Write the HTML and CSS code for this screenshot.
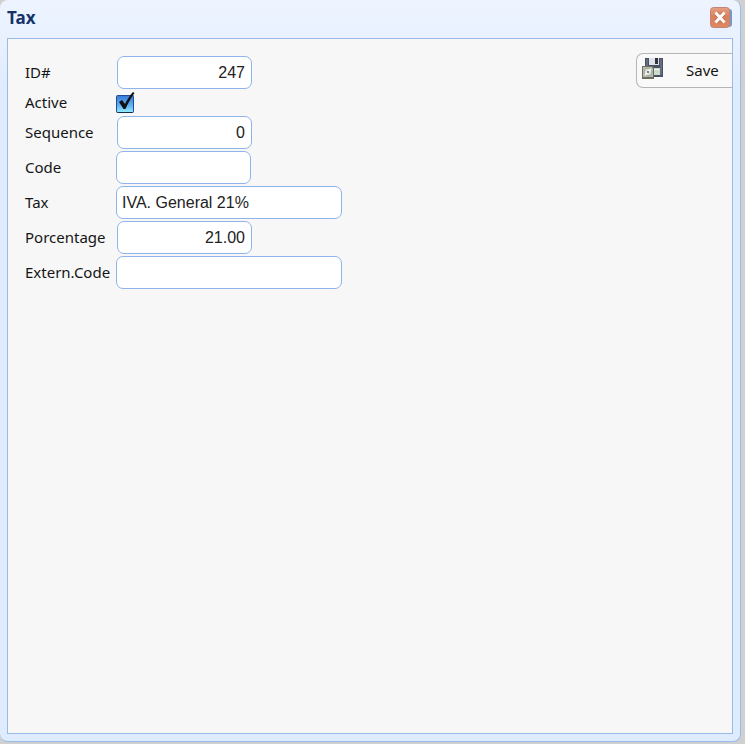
FILE: index.html
```
<!DOCTYPE html>
<html lang="en">
<head>
<meta charset="utf-8">
<title>Tax</title>
<link rel="stylesheet" href="styles.css">
</head>
<body>
<main class="window">
  <header class="titlebar">
    <h1 class="title">Tax</h1>
    <button class="close" type="button" aria-label="Close">
      <svg width="22" height="22" viewBox="0 0 22 22" aria-hidden="true">
        <defs>
          <linearGradient id="closeFill" x1="0" y1="0" x2="0" y2="1">
            <stop offset="0" stop-color="#e5a184"/>
            <stop offset=".45" stop-color="#dc8059"/>
            <stop offset="1" stop-color="#e0885f"/>
          </linearGradient>
        </defs>
        <rect x="3" y="2" width="19" height="18" rx="3" fill="#7897c5"/>
        <rect x=".5" y=".5" width="19" height="20" rx="3" fill="url(#closeFill)" stroke="#bd8677"/>
        <path d="M6 6L14 15M14 6L6 15" fill="none" stroke="#c9714f" stroke-width="5"/>
        <path d="M5.500 5.500L14.500 15.500M14.500 5.500L5.500 15.500" fill="none" stroke="#fff" stroke-width="3"/>
      </svg>
    </button>
  </header>
  <form class="panel">
    <div class="fields">
      <label for="id">ID#</label>
      <input class="field number" id="id" type="text" value="247">
      <label for="active">Active</label>
      <span class="tick">
        <input class="tick-box" id="active" type="checkbox" checked>
        <svg class="tick-mark" width="20" height="22" viewBox="0 0 20 22" aria-hidden="true">
          <path d="M3 10L6 8L9 12C11 8 14 3 17 0L18.500 1C15 6 12 11 9.500 17H7.500Z" fill="#101216"/>
        </svg>
      </span>
      <label for="sequence">Sequence</label>
      <input class="field number" id="sequence" type="text" value="0">
      <label for="code">Code</label>
      <input class="field" id="code" type="text">
      <label for="tax">Tax</label>
      <input class="field wide" id="tax" type="text" value="IVA. General 21%">
      <label for="porcentage">Porcentage</label>
      <input class="field number" id="porcentage" type="text" value="21.00">
      <label for="extern">Extern.Code</label>
      <input class="field wide" id="extern" type="text">
    </div>
    <button class="save" type="button">
      <svg width="24" height="24" viewBox="0 0 24 24" aria-hidden="true">
        <path d="M4 1H22V20H4Z" fill="#4a4f66"/>
        <path d="M5 2H7V10H5ZM19 2H21V18H19Z" fill="#666d80"/>
        <path d="M8 1H18V8H8Z" fill="#dfe3e8"/>
        <path d="M14 1H17V7H14Z" fill="#30353c"/>
        <path d="M6 11H19V18H6Z" fill="#c9dccb"/>
        <path d="M7 12H18V13H7Z" fill="#eef3ef"/>
        <path d="M1 9H12L13 10V22H1Z" fill="#6a6c5e"/>
        <path d="M2 10H11L12 12V20H2Z" fill="#b9bfae"/>
        <circle cx="7" cy="15" r="4" fill="#d9ded9" stroke="#9da396"/>
        <path d="M4 18L7 15L10 12" fill="none" stroke="#f4f6f4" stroke-width="2"/>
        <circle cx="7" cy="15" r="1" fill="#5d645c"/>
      </svg>
      <span>Save</span>
    </button>
  </form>
</main>
</body>
</html>
```
FILE: styles.css
```
* {
  box-sizing: border-box;
}

body {
  margin: 0;
  min-height: 100vh;
  padding: 0 4px 2px 0;
  display: flex;
  background: #d0d0d0;
  color: #151515;
  font: 15px/20px "Noto Sans", sans-serif;
}

.window {
  flex: 1;
  min-width: 0;
  display: flex;
  flex-direction: column;
  padding: 0 7px 7px;
  border: solid #99bbe8;
  border-width: 0 1px 1px 0;
  border-radius: 8px;
  background: linear-gradient(#edf4ff, #e9f1ff 38px, #dfebff 90px, #dfebff);
}

.titlebar {
  height: 38px;
  display: flex;
  align-items: center;
  justify-content: space-between;
  padding: 0 1px 2px 0;
}

.title {
  margin: 0;
  color: #15336b;
  font: bold 17px/20px "Noto Sans", sans-serif;
}

.close {
  width: 22px;
  height: 22px;
  padding: 0;
  border: 0;
  background: none;
}

.close svg,
.save svg {
  display: block;
}

.panel {
  flex: 1;
  display: flex;
  align-items: flex-start;
  justify-content: space-between;
  padding: 14px 0 0 17px;
  border: 1px solid #99bbe8;
  background: #f7f7f7;
  overflow: hidden;
}

.fields {
  display: grid;
  grid-template-columns: 91px auto;
  grid-template-rows: 33px 23px repeat(5, 33px);
  row-gap: 2px;
  align-items: center;
  padding-top: 3px;
}

.fields label {
  padding-bottom: 2px;
  white-space: nowrap;
}

.field {
  width: 135px;
  height: 33px;
  padding: 0 6px 0 5px;
  border: 1px solid #8fb4ea;
  border-radius: 7px;
  background: #fff;
  color: #222;
  font: 16px/20px "Liberation Sans", Arial, sans-serif;
}

.number {
  margin-left: 1px;
  text-align: right;
}

.wide {
  width: 226px;
}

.tick {
  position: relative;
  height: 21px;
}

.tick-box {
  appearance: none;
  display: block;
  width: 18px;
  height: 18px;
  margin: 3px 0 0;
  border: 1px solid #254c92;
  border-bottom-color: #142f48;
  border-radius: 2px;
  background: linear-gradient(#397dd9, #62b2f4 60%, #91eaff);
}

.tick-mark {
  position: absolute;
  left: 0;
  top: 0;
  display: none;
  pointer-events: none;
}

.tick-box:checked + .tick-mark {
  display: block;
}

.save {
  display: flex;
  align-items: center;
  gap: 21px;
  width: 96px;
  height: 35px;
  padding: 0 0 3px 4px;
  border: 1px solid #b5b5b5;
  border-right: 0;
  border-radius: 7px 0 0 7px;
  background: #f9f9f9;
  color: #151515;
  font: 15px/20px "Noto Sans", sans-serif;
}

.save span {
  padding-top: 2px;
}
```
